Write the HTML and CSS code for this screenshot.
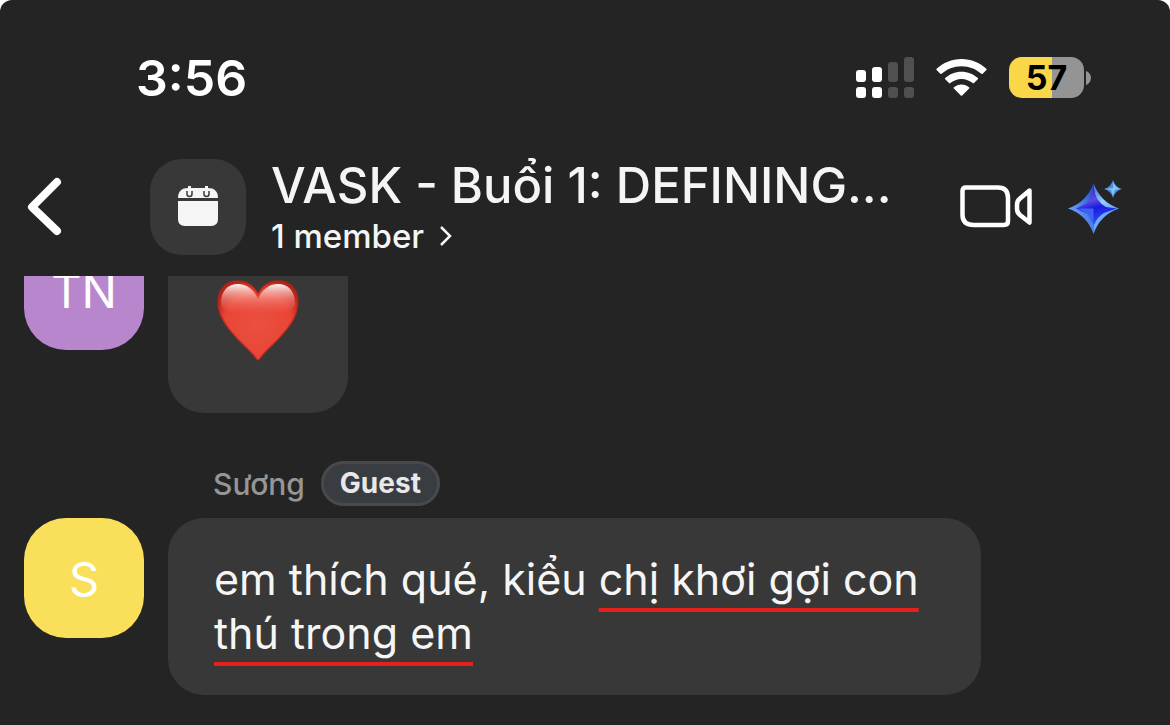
FILE: index.html
```html
<!DOCTYPE html>
<html lang="vi">

<head>
    <meta charset="UTF-8" />
    <meta name="viewport" content="width=device-width, initial-scale=1.0" />
    <title>VASK - Buổi 1</title>
    <link rel="stylesheet" href="styles.css">
</head>

<body>
    <div class="phone">
        <div class="status-bar">
            <span class="time">3:56</span>
            <div class="status-icons">
                <svg class="signal" width="58" height="41" viewBox="0 0 58 41" fill="#fff">
                    <rect x="0" y="13" width="10" height="12" rx="3" />
                    <rect x="16" y="10" width="10" height="15" rx="3" />
                    <rect x="0" y="30" width="10" height="11" rx="3" />
                    <rect x="16" y="30" width="10" height="11" rx="3" />
                    <g fill="#505050">
                        <rect x="32" y="5" width="10" height="20" rx="3" />
                        <rect x="48" y="0" width="10" height="25" rx="3" />
                        <rect x="32" y="30" width="10" height="11" rx="3" />
                        <rect x="48" y="30" width="10" height="11" rx="3" />
                    </g>
                </svg>
                <svg class="wifi" width="51" height="41" viewBox="0 0 51 41" fill="#fff">
                    <path d="M25.5 2C15.800 2 7 5.800 .6 11.800Q0 12.500 .6 13.100L4.300 16.800Q4.900 17.400 5.600 16.800C10.900 12 17.800 9.200 25.500 9.200S40.100 12 45.400 16.800Q46.100 17.400 46.700 16.800L50.400 13.100Q51 12.500 50.400 11.800C44 5.800 35.200 2 25.500 2Z" />
                    <path d="M25.500 14.800C19.200 14.800 13.500 17.200 9.200 21.100Q8.600 21.700 9.200 22.300L13 26.100Q13.600 26.700 14.300 26.100C17.300 23.500 21.200 21.900 25.500 21.900S33.700 23.500 36.700 26.100Q37.400 26.700 38 26.100L41.800 22.300Q42.400 21.700 41.800 21.100C37.500 17.200 31.800 14.800 25.500 14.800Z" />
                    <path d="M25.500 27.500C22.600 27.500 19.900 28.600 17.900 30.300Q17.200 31 17.900 31.600L24.800 38.500Q25.500 39.200 26.200 38.500L33.100 31.600Q33.800 31 33.100 30.300C31.100 28.600 28.400 27.500 25.500 27.500Z" />
                </svg>
                <div class="battery">
                    <span class="battery-level">57</span>
                    <svg width="5" height="14" viewBox="0 0 5 14">
                        <path d="M0 0C3 1 5 4 5 7S3 13 0 14Z" fill="#949494" />
                    </svg>
                </div>
            </div>
        </div>

        <header class="header">
            <button class="icon-button back" aria-label="Back">
                <svg width="36" height="60" viewBox="0 0 36 60" fill="none" stroke="#fff" stroke-width="8" stroke-linecap="round" stroke-linejoin="round">
                    <path d="M31 5L6 30L31 54" />
                </svg>
            </button>
            <div class="group-icon">
                <svg width="42" height="42" viewBox="0 0 42 42">
                    <path d="M1 12C1 5 5 2 11 2H31C37 2 41 5 41 12Z" fill="#f5f5f5" />
                    <path d="M1 15H41V33Q41 40 34 40H8Q1 40 1 33Z" fill="#f5f5f5" />
                    <path d="M12.500 0V5M29.500 0V5" stroke="#f5f5f5" stroke-width="3" />
                    <path d="M10 5V8A2.500 2.500 0 0 0 15 8V5M27 5V8A2.500 2.500 0 0 0 32 8V5" fill="none" stroke="#3a3a3a" stroke-width="1.500" />
                </svg>
            </div>
            <div class="title-block">
                <h1 class="title">VASK - Buổi 1: DEFINING...</h1>
                <a class="members" href="#">1 member
                    <svg width="12" height="20" viewBox="0 0 12 20" fill="none" stroke="#f5f5f5" stroke-width="2.500">
                        <path d="M1 1L10 10L1 19" />
                    </svg>
                </a>
            </div>
            <button class="icon-button" aria-label="Video call">
                <svg width="74" height="44" viewBox="0 0 74 44" fill="none" stroke="#fff" stroke-width="4.500" stroke-linejoin="round">
                    <path d="M6 2.500H38Q48 2.500 48 13V36Q48 40 44 40H14Q2.500 40 2.500 30V6Q2.500 2.500 6 2.500Z" />
                    <path d="M69.500 5.500L60 13.500Q57 16 57 19.500V24Q57 27.500 60 30L69.500 37.500Z" />
                </svg>
            </button>
            <button class="icon-button" aria-label="AI companion">
                <svg width="54" height="54" viewBox="0 0 54 54">
                    <defs>
                        <linearGradient id="left" x1="0" y1="1" x2="1" y2="0">
                            <stop offset="0" stop-color="#8ac2ff" />
                            <stop offset="0.600" stop-color="#4a7ae8" />
                            <stop offset="1" stop-color="#2440c8" />
                        </linearGradient>
                        <linearGradient id="right" x1="0" y1="0" x2="1" y2="1">
                            <stop offset="0" stop-color="#3c60dc" />
                            <stop offset="0.500" stop-color="#98ceff" />
                            <stop offset="1" stop-color="#5c90f8" />
                        </linearGradient>
                        <linearGradient id="core" x1="0.300" y1="0" x2="0.600" y2="1">
                            <stop offset="0" stop-color="#2430c8" />
                            <stop offset="0.350" stop-color="#5a4ae6" />
                            <stop offset="0.550" stop-color="#1a1ae0" />
                            <stop offset="1" stop-color="#2c58f4" />
                        </linearGradient>
                    </defs>
                    <path d="M25.500 3Q19 22 0 28.500Q19 35 25.500 54Z" fill="url(#left)" />
                    <path d="M25.500 3Q32 22 51 28.500L34 32Q26 18 25.500 3Z" fill="url(#right)" />
                    <path d="M25.500 54Q32 35 51 28.500L25.500 28Z" fill="#6ea8ff" />
                    <path d="M25.500 7Q27 21 38 27L49 28.500L36 33Q29 37 26 45L20 34L8 28.500L19 23Q24 16 25.500 7Z" fill="url(#core)" />
                    <path d="M25.500 28.500L10 28.500L20 34L25.500 43Z" fill="#4474f4" fill-opacity="0.800" />
                    <path d="M45 0Q47 7 54 9Q47 11 45 18Q43 11 36 9Q43 7 45 0Z" fill="#4a8cdc" />
                    <path d="M45 2Q47 7 52 9L47 10L45 16L43 10L37 9L45 8Z" fill="#83c4f5" />
                </svg>
            </button>
        </header>

        <main class="chat">
            <div class="message">
                <div class="avatar avatar-purple">TN</div>
                <div class="bubble bubble-emoji">
                    <svg width="82" height="82" viewBox="0 0 82 82" role="img" aria-label="heart">
                        <defs>
                            <radialGradient id="heart" cx="0.500" cy="0.550" r="0.600">
                                <stop offset="0" stop-color="#e9503f" />
                                <stop offset="0.700" stop-color="#ea4536" />
                                <stop offset="1" stop-color="#b52418" />
                            </radialGradient>
                            <linearGradient id="shine" x1="0" y1="0" x2="0" y2="1">
                                <stop offset="0" stop-color="#fff" stop-opacity="0.950" />
                                <stop offset="0.500" stop-color="#f7a59c" stop-opacity="0.500" />
                                <stop offset="1" stop-color="#f26a5c" stop-opacity="0" />
                            </linearGradient>
                        </defs>
                        <path id="heart-shape" d="M41 80Q40 80 38 77C32 69 22 62 12 49C4 39 1 31 1 22C1 9 9 1 21 1C30 1 37 6 41 14C45 6 52 1 61 1C73 1 81 9 81 22C81 31 78 39 70 49C60 62 50 69 44 77Q42 80 41 80Z" fill="url(#heart)" />
                        <use href="#heart-shape" fill="none" stroke="#b22217" stroke-width="2" stroke-opacity="0.500" />
                        <path d="M4 23C4 11 11 4 21 4C30 4 37 10 41 19C45 10 52 4 61 4C71 4 78 11 78 23C78 33 60 34 41 34C22 34 4 33 4 23Z" fill="url(#shine)" />
                    </svg>
                </div>
            </div>

            <div class="sender">
                <span class="sender-name">Sương</span>
                <span class="badge">Guest</span>
            </div>
            <div class="message">
                <div class="avatar avatar-yellow">S</div>
                <p class="bubble">em thích qué, kiểu <u class="marked">chị khơi gợi con</u> <u class="marked">thú trong em</u></p>
            </div>
        </main>
    </div>
</body>

</html>
```
FILE: styles.css
```css
* {
    box-sizing: border-box;
}

body {
    margin: 0;
    background: #fff;
    font-family: Inter, "Liberation Sans", sans-serif;
    color: #f5f5f5;
}

svg {
    display: block;
    flex: none;
}

.phone {
    display: flex;
    flex-direction: column;
    height: 100vh;
    background: #242424;
    border-radius: 12px 12px 0 0;
    overflow: hidden;
}

/* status bar */
.status-bar {
    display: flex;
    align-items: flex-start;
    justify-content: space-between;
    padding: 48px 79px 0 136px;
}

.time {
    color: #fff;
    font-size: 50px;
    font-weight: 600;
    line-height: 60px;
}

.status-icons {
    display: flex;
    align-items: center;
    gap: 22px;
    padding-top: 9px;
}

.battery {
    display: flex;
    align-items: center;
    gap: 2px;
}

.battery-level {
    width: 75px;
    height: 41px;
    border-radius: 13px;
    background: linear-gradient(to right, #fad748 57%, #949494 57%);
    color: #000;
    font-size: 34px;
    font-weight: 700;
    line-height: 42px;
    text-align: center;
}

/* header */
.header {
    display: flex;
    align-items: center;
    padding: 30px 48px 0 26px;
    height: 168px;
    flex: none;
}

.icon-button {
    padding: 0;
    border: 0;
    background: none;
    margin-left: 34px;
}

.icon-button.back {
    margin: 0 88px 0 0;
}

.group-icon {
    display: flex;
    align-items: center;
    justify-content: center;
    flex: none;
    width: 96px;
    height: 96px;
    border-radius: 32px;
    background: #383838;
}

.title-block {
    flex: 1;
    min-width: 0;
    padding-left: 25px;
}

.title {
    margin: 0;
    font-size: 49px;
    font-weight: 500;
    line-height: 58px;
    white-space: nowrap;
}

.members {
    display: flex;
    align-items: center;
    gap: 16px;
    color: inherit;
    font-size: 33px;
    font-weight: 500;
    line-height: 42px;
    text-decoration: none;
}

/* chat */
.chat {
    display: flex;
    flex: 1;
    flex-direction: column;
    justify-content: flex-end;
    min-height: 0;
    padding: 0 189px 30px 24px;
    overflow: hidden;
}

.message {
    display: flex;
    align-items: flex-start;
    flex: none;
    gap: 24px;
}

.avatar {
    flex: none;
    width: 120px;
    height: 120px;
    border-radius: 42px;
    color: #fff;
    font-size: 47px;
    line-height: 122px;
    text-align: center;
}

.avatar-purple {
    background: #b886cc;
}

.avatar-yellow {
    background: #fae05a;
}

.bubble {
    margin: 0;
    padding: 34px 46px 35px;
    border-radius: 36px;
    background: #383838;
    font-size: 43px;
    line-height: 54px;
}

.bubble-emoji {
    padding: 50px 49px 51px;
}

.marked {
    text-decoration: underline 4px #e8201c;
    text-decoration-skip-ink: none;
    text-underline-offset: 13px;
}

.sender {
    display: flex;
    align-items: center;
    flex: none;
    gap: 16px;
    padding: 48px 0 12px 189px;
}

.sender-name {
    color: #969696;
    font-size: 30px;
    font-weight: 500;
    line-height: 36px;
}

.badge {
    padding: 0 16px;
    border: 3px solid #47494c;
    border-radius: 23px;
    background: #393c41;
    color: #e8e8ea;
    font-size: 28px;
    font-weight: 700;
    line-height: 39px;
}
```
